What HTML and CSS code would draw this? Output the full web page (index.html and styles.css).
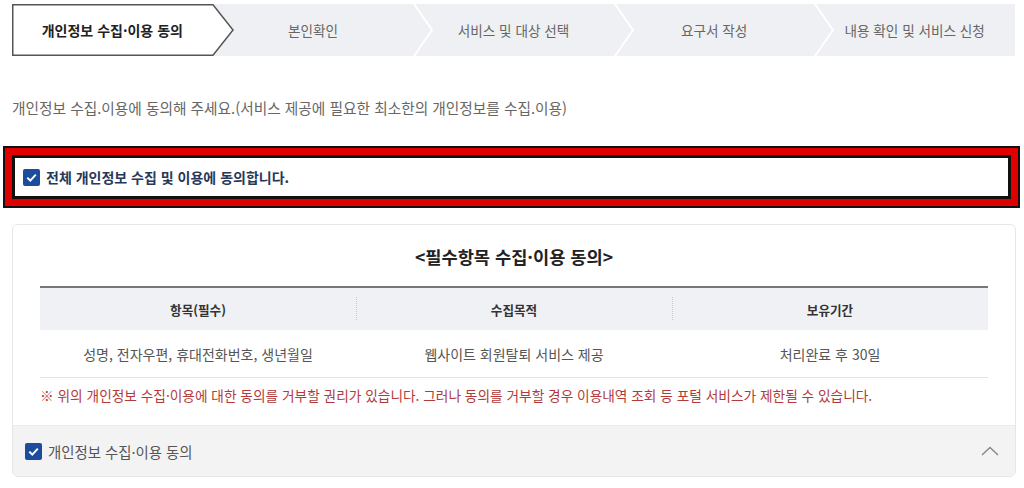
FILE: index.html
```html
<!DOCTYPE html>
<html lang="ko">
<head>
    <meta charset="UTF-8">
    <meta name="viewport" content="width=device-width, initial-scale=1.0">
    <title>개인정보 수집·이용 동의</title>
    <link rel="stylesheet" href="styles.css">
</head>
<body>
    <div class="page">
        <ol class="stepper">
            <li class="step active">
                <svg class="step-shape" width="223" height="52" viewBox="0 0 223 52">
                    <polygon points="0.75,0.75 201,0.75 221,26 201,51.25 0.75,51.25" fill="#fff" stroke="#555" stroke-width="1.5"/>
                </svg>
                <span>개인정보 수집·이용 동의</span>
            </li>
            <li class="step">
                <span>본인확인</span>
                <svg class="chevron" width="20" height="52" viewBox="0 0 20 52"><polyline points="1,0 19,26 1,52" fill="none" stroke="#fff" stroke-width="2"/></svg>
            </li>
            <li class="step">
                <span>서비스 및 대상 선택</span>
                <svg class="chevron" width="20" height="52" viewBox="0 0 20 52"><polyline points="1,0 19,26 1,52" fill="none" stroke="#fff" stroke-width="2"/></svg>
            </li>
            <li class="step">
                <span>요구서 작성</span>
                <svg class="chevron" width="20" height="52" viewBox="0 0 20 52"><polyline points="1,0 19,26 1,52" fill="none" stroke="#fff" stroke-width="2"/></svg>
            </li>
            <li class="step">
                <span>내용 확인 및 서비스 신청</span>
            </li>
        </ol>

        <p class="intro">개인정보 수집.이용에 동의해 주세요.(서비스 제공에 필요한 최소한의 개인정보를 수집.이용)</p>

        <label class="agree-all">
            <svg class="check" width="17" height="17" viewBox="0 0 17 17">
                <rect width="17" height="17" rx="2" fill="#1d4c9e"/>
                <polyline points="4.3,8.6 7.3,11.6 12.8,5.6" fill="none" stroke="#fff" stroke-width="2"/>
            </svg>
            <span>전체 개인정보 수집 및 이용에 동의합니다.</span>
        </label>

        <div class="terms">
            <div class="terms-body">
                <h2 class="terms-title">&lt;필수항목 수집·이용 동의&gt;</h2>
                <table class="terms-table">
                    <thead>
                        <tr>
                            <th>항목(필수)</th>
                            <th>수집목적</th>
                            <th>보유기간</th>
                        </tr>
                    </thead>
                    <tbody>
                        <tr>
                            <td>성명, 전자우편, 휴대전화번호, 생년월일</td>
                            <td>웹사이트 회원탈퇴 서비스 제공</td>
                            <td>처리완료 후 30일</td>
                        </tr>
                    </tbody>
                </table>
                <p class="notice">※ 위의 개인정보 수집·이용에 대한 동의를 거부할 권리가 있습니다. 그러나 동의를 거부할 경우 이용내역 조회 등 포털 서비스가 제한될 수 있습니다.</p>
            </div>
            <div class="terms-footer">
                <label class="agree-item">
                    <svg class="check" width="17" height="17" viewBox="0 0 17 17">
                        <rect width="17" height="17" rx="2" fill="#1d4c9e"/>
                        <polyline points="4.3,8.6 7.3,11.6 12.8,5.6" fill="none" stroke="#fff" stroke-width="2"/>
                    </svg>
                    <span>개인정보 수집·이용 동의</span>
                </label>
                <button class="toggle" type="button">
                    <svg width="18" height="10" viewBox="0 0 18 10"><polyline points="1,9 9,1.5 17,9" fill="none" stroke="#888" stroke-width="1.5"/></svg>
                </button>
            </div>
        </div>
    </div>
</body>
</html>
```

FILE: styles.css
```css
body {
    margin: 0;
    font-family: "Noto Sans CJK KR", "Noto Sans", sans-serif;
    background-color: #fff;
    color: #333;
}

.page {
    padding: 4px 8px 0 12px;
}

/* 단계 표시 */
.stepper {
    display: flex;
    list-style: none;
    margin: 0;
    padding: 0;
    width: 1003px;
    height: 52px;
    background-color: #eff0f3;
}

.step {
    flex: 1;
    position: relative;
    display: flex;
    align-items: center;
    justify-content: center;
    font-size: 13.6px;
    color: #666;
}

.step span {
    position: relative; /* 도형 위에 글자 */
    z-index: 2;
}

.step.active {
    color: #222;
    font-weight: 700;
    font-size: 14px;
}

.step-shape {
    position: absolute;
    left: 0;
    top: 0;
    z-index: 1;
}

.chevron {
    position: absolute;
    top: 0;
    left: 100%;
    z-index: 1;
}

.intro {
    margin: 42px 0 0;
    font-size: 14.7px;
    line-height: 20px;
    color: #666;
}

/* 전체 동의 (빨간 강조 박스) */
.agree-all {
    display: flex;
    align-items: center;
    gap: 6px;
    height: 44px;
    box-sizing: border-box;
    margin: 37px 5px 0 0;
    padding: 0 0 0 8px;
    border: 3px solid #111;
    background-color: #fff;
    box-shadow: 0 0 0 7px #e10000, 0 0 0 9px #111;
    font-size: 14px;
    font-weight: 700;
    color: #28385a;
}

.check {
    flex: none;
}

.terms {
    margin-top: 25px;
    border: 1px solid #e6e6e6;
    border-radius: 6px;
    overflow: hidden;
}

.terms-body {
    padding: 20px 27px 20px 27px;
}

.terms-title {
    margin: 0 0 17px;
    font-size: 17.6px;
    line-height: 24px;
    font-weight: 700;
    text-align: center;
    color: #222;
}

.terms-table {
    width: 100%;
    border-collapse: collapse;
    table-layout: fixed;
    border-top: 2px solid #777;
}

.terms-table th {
    position: relative;
    height: 42px;
    padding: 0;
    background-color: #eff1f5;
    font-size: 12.6px;
    font-weight: 700;
    color: #333;
}

.terms-table th + th::before {
    content: "";
    position: absolute;
    left: 0;
    top: 9px;
    height: 23px;
    border-left: 1px dotted #c8c8c8;
}

.terms-table td {
    height: 47px;
    padding: 0;
    border-bottom: 1px solid #e4e4e4;
    text-align: center;
    font-size: 14px;
    color: #555;
}

.notice {
    margin: 7px 0 0;
    font-size: 13.7px;
    line-height: 20px;
    color: #b33a3a;
}

.terms-footer {
    display: flex;
    align-items: center;
    justify-content: space-between;
    height: 50px;
    padding: 0 16px 0 12px;
    border-top: 1px solid #ececec;
    background-color: #f3f3f4;
}

.agree-item {
    display: flex;
    align-items: center;
    gap: 6px;
    font-size: 14.4px;
    color: #555;
}

.toggle {
    padding: 0;
    background: transparent;
    border: none;
    cursor: pointer;
    line-height: 0;
}
```
